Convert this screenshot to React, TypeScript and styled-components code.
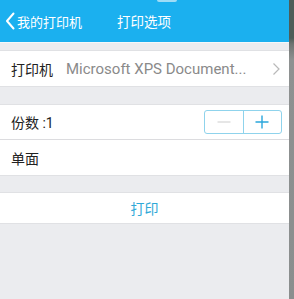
import styled, { createGlobalStyle } from 'styled-components'

const GlobalStyle = createGlobalStyle`
  html, body {
    margin: 0;
    padding: 0;
    background: #ebecef;
  }
  body {
    font-family: Roboto, "Noto Sans CJK SC", "Noto Sans", sans-serif;
  }
`

const Screen = styled.div`
  display: flex;
  width: 294px;
  height: 299px;
  overflow: hidden;
`

const Main = styled.div`
  flex: 0 0 289px;
  display: flex;
  flex-direction: column;
  background: #ebecef;
`

const SideStrip = styled.div`
  flex: 1;
  background: linear-gradient(#4d5d58 0, #4d5d58 38px, #6f7472 44px, #8e9191 60px, #8a8e8e 100%);
`

const Header = styled.header`
  position: relative;
  display: flex;
  align-items: center;
  height: 42px;
  background: #1bb0ef;
  color: #fff;
  font-size: 13px;
  border-bottom: 1px solid #f4f8fa;
`

const PullTab = styled.div`
  position: absolute;
  top: 0;
  left: 157px;
  width: 20px;
  height: 2px;
  border-radius: 0 0 2px 2px;
  background: #9fdcf6;
`

const BackLink = styled.div`
  display: flex;
  align-items: center;
  gap: 2px;
  padding-left: 5px;
  width: 112px;
`

const Title = styled.div`
  font-size: 13.5px;
`

const Group = styled.div<{ $gap: number }>`
  margin-top: ${({ $gap }) => $gap}px;
  background: #fff;
  border-top: 1px solid #e0e1e4;
  border-bottom: 1px solid #e0e1e4;
`

const Row = styled.div<{ $h: number; $divider?: boolean }>`
  display: flex;
  align-items: center;
  height: ${({ $h }) => $h}px;
  padding: 0 7px 0 11px;
  font-size: 14px;
  color: #222;
  border-bottom: ${({ $divider }) => ($divider ? '1px solid #dcdcdf' : 'none')};
`

const Label = styled.span`
  width: 55px;
  flex: none;
`

const Value = styled.span`
  flex: 1;
  color: #8a8a8a;
  font-size: 15px;
  white-space: nowrap;
  overflow: hidden;
`

const Grow = styled.span`
  flex: 1;
`

const Stepper = styled.div`
  display: flex;
  width: 76px;
  height: 22px;
  border: 1px solid #8fd3ec;
  border-radius: 3px;
`

const StepButton = styled.div<{ $first?: boolean }>`
  flex: 1;
  display: flex;
  align-items: center;
  justify-content: center;
  border-right: ${({ $first }) => ($first ? '1px solid #8fd3ec' : 'none')};
`

const ActionRow = styled.div`
  display: flex;
  align-items: center;
  justify-content: center;
  height: 30px;
  font-size: 14px;
  color: #2fa9d8;
`

export default function App() {
  return (
    <Screen>
      <GlobalStyle />
      <Main>
        <Header>
          <PullTab />
          <BackLink>
            <svg width="10" height="18" viewBox="0 0 10 18">
              <path d="M8.5 1.5 L2 9 L8.5 16.5" fill="none" stroke="#fff" strokeWidth="2" strokeLinecap="round" strokeLinejoin="round" />
            </svg>
            <span>我的打印机</span>
          </BackLink>
          <Title>打印选项</Title>
        </Header>

        <Group $gap={7}>
          <Row $h={35}>
            <Label>打印机</Label>
            <Value>Microsoft XPS Document...</Value>
            <svg width="12" height="14" viewBox="0 0 12 14">
              <path d="M3.5 1.5 L9 7 L3.5 12.5" fill="none" stroke="#b9b9b9" strokeWidth="1.2" />
            </svg>
          </Row>
        </Group>

        <Group $gap={17}>
          <Row $h={34} $divider>
            <Grow>份数 :1</Grow>
            <Stepper>
              <StepButton $first>
                <svg width="14" height="14" viewBox="0 0 14 14">
                  <path d="M0.5 7 H13.5" stroke="#d6d6d6" strokeWidth="1.2" />
                </svg>
              </StepButton>
              <StepButton>
                <svg width="14" height="14" viewBox="0 0 14 14">
                  <path d="M0.5 7 H13.5 M7 0.5 V13.5" stroke="#2aa6dc" strokeWidth="1.4" />
                </svg>
              </StepButton>
            </Stepper>
          </Row>
          <Row $h={35}>
            <span>单面</span>
          </Row>
        </Group>

        <Group $gap={16}>
          <ActionRow>打印</ActionRow>
        </Group>
      </Main>
      <SideStrip />
    </Screen>
  )
}
